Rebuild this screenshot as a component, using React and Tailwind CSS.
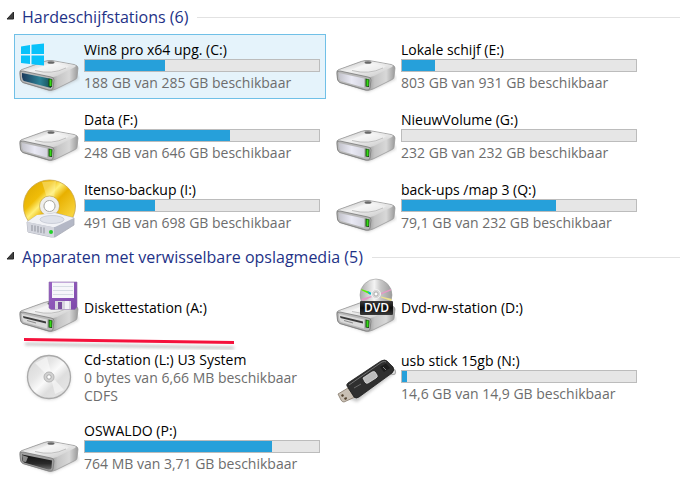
import { useState } from "react";
import clsx from "clsx";

const hardDrives = [
  { name: "Win8 pro x64 upg. (C:)", icon: "windows", used: 34, lines: ["188 GB van 285 GB beschikbaar"] },
  { name: "Lokale schijf (E:)", icon: "drive", used: 14, lines: ["803 GB van 931 GB beschikbaar"] },
  { name: "Data (F:)", icon: "drive", used: 62, lines: ["248 GB van 646 GB beschikbaar"] },
  { name: "NieuwVolume (G:)", icon: "drive", used: 0, lines: ["232 GB van 232 GB beschikbaar"] },
  { name: "Itenso-backup (I:)", icon: "backup", used: 30, lines: ["491 GB van 698 GB beschikbaar"] },
  { name: "back-ups /map 3 (Q:)", icon: "drive", used: 66, lines: ["79,1 GB van 232 GB beschikbaar"] },
];

const removable = [
  { name: "Diskettestation (A:)", icon: "floppy", marked: true, lines: [] },
  { name: "Dvd-rw-station (D:)", icon: "dvd", lines: [] },
  { name: "Cd-station (L:) U3 System", icon: "cd", lines: ["0 bytes van 6,66 MB beschikbaar", "CDFS"] },
  { name: "usb stick 15gb (N:)", icon: "usb", used: 2, lines: ["14,6 GB van 14,9 GB beschikbaar"] },
  { name: "OSWALDO (P:)", icon: "open", used: 80, lines: ["764 MB van 3,71 GB beschikbaar"] },
];

// Gradients shared by all the icons
const IconDefs = () => (
  <svg className="absolute size-0" aria-hidden="true">
    <defs>
      <linearGradient id="top" x1="0" y1="0" x2="1" y2="1">
        <stop offset="0" stopColor="#b4b4b4" />
        <stop offset="0.4" stopColor="#f2f2f2" />
        <stop offset="0.7" stopColor="#dcdcdc" />
        <stop offset="1" stopColor="#c4c4c4" />
      </linearGradient>
      <linearGradient id="side" x1="0" y1="0" x2="1" y2="0">
        <stop offset="0.5" stopColor="#8c8c8c" />
        <stop offset="0.65" stopColor="#c4c4c4" />
        <stop offset="0.85" stopColor="#d8d8d8" />
        <stop offset="1" stopColor="#9a9a9a" />
      </linearGradient>
      <linearGradient id="face" x1="0" y1="0" x2="1" y2="0">
        <stop offset="0" stopColor="#c4c4cc" />
        <stop offset="0.5" stopColor="#e9e9f4" />
        <stop offset="1" stopColor="#d4d4e0" />
      </linearGradient>
      <linearGradient id="teal" x1="0" y1="0" x2="1" y2="0">
        <stop offset="0" stopColor="#1c3a5c" />
        <stop offset="0.6" stopColor="#2c8296" />
        <stop offset="1" stopColor="#174a50" />
      </linearGradient>
      <linearGradient id="dark" x1="0" y1="0" x2="0" y2="1">
        <stop offset="0" stopColor="#111" />
        <stop offset="0.6" stopColor="#2a2a2a" />
        <stop offset="1" stopColor="#6a6a6a" />
      </linearGradient>
      <linearGradient id="gold" x1="0" y1="0" x2="1" y2="1">
        <stop offset="0" stopColor="#d9a400" />
        <stop offset="0.3" stopColor="#f0bd08" />
        <stop offset="0.4" stopColor="#fff07a" />
        <stop offset="0.52" stopColor="#e8b000" />
        <stop offset="0.8" stopColor="#f8d43c" />
        <stop offset="1" stopColor="#d39b00" />
      </linearGradient>
      <linearGradient id="silver" x1="0" y1="0" x2="1" y2="1">
        <stop offset="0" stopColor="#d4d4d4" />
        <stop offset="0.35" stopColor="#e6e6e6" />
        <stop offset="0.5" stopColor="#fafafa" />
        <stop offset="0.65" stopColor="#dedede" />
        <stop offset="1" stopColor="#e8e8e8" />
      </linearGradient>
      <linearGradient id="dvdDisc" x1="0" y1="0" x2="1" y2="0">
        <stop offset="0" stopColor="#a8a8a8" />
        <stop offset="0.45" stopColor="#f4f4f4" />
        <stop offset="0.65" stopColor="#c6c6c6" />
        <stop offset="1" stopColor="#9c9c9c" />
      </linearGradient>
      <linearGradient id="label" x1="0" y1="0" x2="0" y2="1">
        <stop offset="0" stopColor="#3c3c3c" />
        <stop offset="0.5" stopColor="#0c0c0c" />
        <stop offset="1" stopColor="#3a3a3a" />
      </linearGradient>
      <linearGradient id="purple" x1="0" y1="0" x2="1" y2="1">
        <stop offset="0" stopColor="#9a62c4" />
        <stop offset="1" stopColor="#7d48aa" />
      </linearGradient>
      <filter id="blur" x="-20%" y="-50%" width="140%" height="200%">
        <feGaussianBlur stdDeviation="1.5" />
      </filter>
    </defs>
  </svg>
);

const DriveBody = ({ front = "plain" }) => (
  <>
    <path d="M5 47 L33 57 L61 44 L58 38 L10 42Z" fill="#888" opacity="0.4" filter="url(#blur)" />
    <path
      d="M2 38 Q1 35.500 4 34.500 L26 26.500 Q30 25 34 25.500 L56 29.500 Q60 30.500 60 33 L59 42 Q59 43.500 57 44.500 L38 54 Q34 56 30 55 L5 47.500 Q3 46.500 2.500 44Z"
      fill="url(#side)"
      stroke="#9a9a9a"
      strokeWidth="0.8"
    />
    <path
      d="M3 36 Q3 35 5 34.500 L26 27 Q30 25.500 34 26 L56 30 Q59 30.500 57 32 L39 41 Q36 42.500 32 42Z"
      fill="url(#top)"
    />
    <path d="M16 35 L29 29 Q33 28 40 29 L51 31 Q47 36 33 38Z" fill="#fff" opacity="0.35" />
    <path d="M17 35.500 Q34 40 48 33" fill="none" stroke="#aaa" strokeWidth="0.7" />
    <ellipse cx="33" cy="27.500" rx="3.500" ry="1.300" fill="#666" />
    <path
      d="M2 38 Q2 35.500 5 36 L33 42 Q36 42.500 36 45 L35 53 Q34.500 56 31 55 L5 47.500 Q3 46.500 2.500 44Z"
      fill={front === "open" ? "#a0a0a0" : "#b8b8b8"}
      stroke="#7c7c7c"
      strokeWidth="0.8"
    />
    {front === "plain" && (
      <path d="M4 38 L29 43.500 V52.500 L6 46 Q4.500 45 4 42Z" fill="url(#face)" />
    )}
    {front === "teal" && (
      <path d="M4 38 L34 44 L33 53 L6 46 Q4.500 45 4 42Z" fill="url(#teal)" />
    )}
    {front === "open" && (
      <>
        <path d="M4 38.500 L34 44.500 L33.500 52 Q33 54 30 53.500 L6 46.500 Q4 45 4 42Z" fill="url(#dark)" />
        <path d="M4 39 L10 41 L8 46 L5 45.500Z" fill="#8a8a8a" />
      </>
    )}
    {front === "slot" && (
      <>
        <path d="M4 38 L29 43.500 V52.500 L6 46 Q4.500 45 4 42Z" fill="#dadada" />
        <path d="M5 40 L28 45.500 V47.500 L5.500 42Z" fill="#3b3b3b" />
        <path d="M9 44.500 L18 47" stroke="#8c8c8c" />
      </>
    )}
    {front !== "open" && (
      <>
        <path d="M30.500 43.500 L34.500 44.500 L34 52 L30.500 51.500Z" fill="#14470c" />
        <path d="M31.500 44.500 H33.500 V51 H31.500Z" fill="#35db16" />
      </>
    )}
  </>
);

const Windows = () => (
  <>
    <DriveBody front="teal" />
    <path
      d="M3 11.500 L12 10 V19 H3Z M13.500 9.800 L26 8.500 V19 H13.500Z M3 20.500 H12 V29 L3 28Z M13.500 20.500 H26 V30.500 L13.500 29.200Z"
      fill="#08c2fa"
    />
  </>
);

const Backup = () => (
  <>
    <path
      d="M31.500 5 A26 26 0 1 0 31.500 57 A26 26 0 1 0 31.500 5Z M31.500 24.500 A6.500 6.500 0 1 1 31.500 37.500 A6.500 6.500 0 1 1 31.500 24.500Z"
      fill="url(#gold)"
      fillRule="evenodd"
      stroke="#c9a64a"
      strokeWidth="0.8"
    />
    <path d="M24 7 L29 23 L36 23 L38 6Z" fill="#fff5ae" opacity="0.4" />
    <circle cx="31.500" cy="31" r="8" fill="none" stroke="#eee" strokeWidth="4" />
    <circle cx="31.500" cy="31" r="5.500" fill="#fff" stroke="#a8a8a8" />
    <circle cx="31.500" cy="31" r="10" fill="none" stroke="#b99a3a" strokeWidth="0.6" />
    {/* small drive in front of the disc */}
    <path d="M9 47 L18 41 L37 38 L56 43 V50 L37 62 L33 62 L10 57Z" fill="#b4b8c6" stroke="#a8abb5" strokeWidth="0.8" />
    <path d="M9 47 L19 40 L37 38 L56 43 L37 52 L34 52Z" fill="#f1f2f6" />
    <ellipse cx="34" cy="44.500" rx="12" ry="4" fill="#dfe2ea" stroke="#bfc3ce" strokeWidth="0.7" />
    <path d="M9 47 L34 52 L36 52 V62 L33 62 L10 57Z" fill="#d4d6de" />
    <path d="M14 50 V56 M17 50.500 V56.500 M20 51 V57.500 M23 52 V58 M26 52.500 V58.500" stroke="#8f929c" />
    <circle cx="33" cy="57" r="2" fill="#22d02a" />
  </>
);

const Floppy = () => (
  <>
    <DriveBody front="slot" />
    <path d="M31 6 H59 V31 L57 33.500 H33 L31 32Z" fill="url(#purple)" stroke="#8a6aa8" strokeWidth="0.6" />
    <path d="M34 6.500 H56 V22 H34Z" fill="#f6f6fa" />
    <path d="M35 10.500 H55 M35 14.500 H55 M35 18.500 H55" stroke="#d6dce4" />
    <path d="M37 25 H53 V33.500 H37Z" fill="#d8d6df" />
    <path d="M40 26 H44 V33 H40Z" fill="#7a4f9f" />
    <path d="M47 25 H51 V33 H47Z" fill="#f3f3f7" />
  </>
);

const Dvd = () => (
  <>
    <DriveBody front="slot" />
    <circle cx="41" cy="19" r="16" fill="url(#dvdDisc)" stroke="#999" strokeWidth="0.6" />
    <path d="M26 13 L35 16 L34 18 L27 14.500Z" fill="#5cf000" />
    <path d="M32 15 L37 17 L35 19Z" fill="#00b7c9" />
    <path d="M26 23 L36 20 L37 21 L28 25Z M46 17 L56 13 L56 14.500 L46 18.500Z" fill="#e59ac6" />
    <path d="M46 20.500 L57 23 L56 25 L46 21.500Z" fill="#efe28a" />
    <circle cx="41" cy="18" r="4.500" fill="#d6d6d6" stroke="#f2f2f2" />
    <circle cx="41" cy="18" r="2" fill="#fff" stroke="#999" strokeWidth="0.7" />
    <rect x="25" y="25" width="33" height="14" rx="1" fill="url(#label)" />
    <text x="41.500" y="36" textAnchor="middle" fontSize="12" fontWeight="600" fill="#fff" fontFamily="Open Sans">
      DVD
    </text>
  </>
);

const Cd = () => (
  <>
    <circle cx="31" cy="32" r="22" fill="#888" opacity="0.3" filter="url(#blur)" />
    <circle cx="31" cy="31" r="21.500" fill="url(#silver)" stroke="#a9a9a9" strokeWidth="1.300" />
    <path d="M17 17 L28 28 L33 26 L29 11Z M34 36 L37 48 L46 44 L37 34Z" fill="#fff" opacity="0.5" />
    <circle cx="31" cy="31" r="5" fill="#d2d2d2" stroke="#b4b4b4" />
    <circle cx="31" cy="31" r="2.200" fill="#fff" stroke="#999" strokeWidth="0.800" />
  </>
);

const Usb = () => (
  <>
    <path d="M12 52 L22 56 L60 27 L56 21Z" fill="#777" opacity="0.4" filter="url(#blur)" />
    <path d="M3 48 L13 42 L20 51 L9 56 Q7 56 6 54Z" fill="#c9c0b4" stroke="#85796b" strokeWidth="0.800" />
    <path d="M6 49 L8 48 L9 50 L7 51Z M9 52 L11.500 51 L12 53 L10 54Z" fill="#54432f" />
    <circle cx="58" cy="26" r="2.500" fill="none" stroke="#aaa" strokeWidth="1.200" />
    <path
      d="M12 40 Q11 39 13 37 L46 15 Q50 13 52 15 L58 21 Q60 24 57 27 L24 51 Q21 53 19 51Z"
      fill="#2f2f2f"
      stroke="#1c1c1c"
      strokeWidth="0.800"
    />
    <path d="M14 39 L47 16 Q50 15 51 16" fill="none" stroke="#737373" />
    <path d="M45 21 L51 17.500 L55 22 L49 26Z" fill="#1c1c1c" />
    <path d="M48 21 L51 24" stroke="#999" strokeWidth="0.800" />
    <path d="M19 42 L26 38" stroke="#777" strokeWidth="0.800" />
    <path d="M28 32 L37 26 Q39 25 40 26 L42 29 Q43 31 41 32 L33 37 Q31 38 30 36Z" fill="#bcbcbc" stroke="#e0e0e0" strokeWidth="0.800" />
  </>
);

const drawings = {
  windows: <Windows />,
  drive: <DriveBody />,
  backup: <Backup />,
  floppy: <Floppy />,
  dvd: <Dvd />,
  cd: <Cd />,
  usb: <Usb />,
  open: <DriveBody front="open" />,
};

const DriveTile = ({ drive, selected, onSelect }) => {
  const { name, icon, used, lines, marked } = drive;

  return (
    <li className="relative">
      <button
        type="button"
        onClick={onSelect}
        aria-pressed={selected}
        className={clsx(
          "flex h-[65px] w-full items-center gap-1 border pl-[3px] pr-[5px] text-left text-sm leading-[18px]",
          selected ? "border-[#70c0e7] bg-[#e5f3fb]" : "border-transparent"
        )}
      >
        <svg viewBox="0 0 62 63" className="h-[63px] w-[62px] shrink-0" aria-hidden="true">
          {drawings[icon]}
        </svg>
        <span className="flex min-w-0 flex-1 flex-col">
          <span className="whitespace-nowrap text-black">{name}</span>
          {used !== undefined && (
            <span className="mb-0.5 block h-[13px] border border-[#bcbcbc] bg-[#e6e6e6]">
              <span className="block h-full bg-[#26a0da]" style={{ width: `${used}%` }} />
            </span>
          )}
          {lines.map((line) => (
            <span key={line} className="whitespace-nowrap text-[#6d6d6d]">
              {line}
            </span>
          ))}
        </span>
      </button>
      {/* Hand-drawn underline */}
      {marked && (
        <svg viewBox="0 0 220 16" className="pointer-events-none absolute left-1.5 top-[60px] h-4 w-[220px]" aria-hidden="true">
          <path d="M5 9 L214 13" stroke="#777" strokeWidth="3" opacity="0.4" filter="url(#blur)" />
          <path d="M4 3 L214 6 V9 L4 6Z" fill="#f5123c" />
        </svg>
      )}
    </li>
  );
};

const DriveGroup = ({ title, drives, selected, onSelect, headerClass }) => {
  const [open, setOpen] = useState(true);

  return (
    <section>
      <h2 className={clsx("flex items-center gap-[9px] pl-1.5", headerClass)}>
        <button
          type="button"
          aria-expanded={open}
          onClick={() => setOpen(!open)}
          className="flex items-center gap-[7px] text-base leading-6 text-[#1e3287]"
        >
          <svg viewBox="0 0 9 14" className={clsx("h-3.5 w-[9px]", !open && "-rotate-45")} aria-hidden="true">
            <path d="M7.500 2 V9 H1Z" fill="#404040" stroke="#262626" />
          </svg>
          {title} ({drives.length})
        </button>
        <span className="h-px flex-1 bg-[#e2e2e2]" />
      </h2>
      {open && (
        <ul className="grid max-w-[643px] grid-cols-2 gap-[5px] pl-3.5">
          {drives.map((drive) => (
            <DriveTile
              key={drive.name}
              drive={drive}
              selected={selected === drive.name}
              onSelect={() => onSelect(drive.name)}
            />
          ))}
        </ul>
      )}
    </section>
  );
};

const App = () => {
  const [selected, setSelected] = useState(hardDrives[0].name);

  return (
    <main className="min-h-screen bg-white font-['Open_Sans','Noto_Sans',sans-serif]">
      <IconDefs />
      <DriveGroup
        title="Hardeschijfstations"
        drives={hardDrives}
        selected={selected}
        onSelect={setSelected}
        headerClass="h-[34px]"
      />
      <DriveGroup
        title="Apparaten met verwisselbare opslagmedia"
        drives={removable}
        selected={selected}
        onSelect={setSelected}
        headerClass="h-9"
      />
    </main>
  );
};

export default App;
